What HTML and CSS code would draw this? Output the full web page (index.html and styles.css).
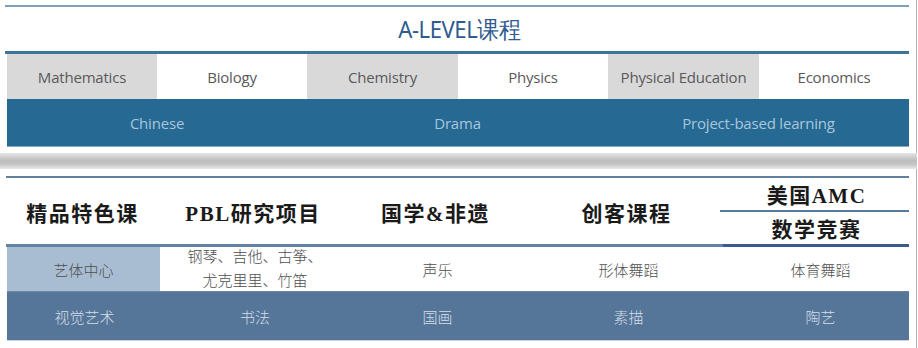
FILE: index.html
```html
<!DOCTYPE html>
<html>
<head>
<meta charset="utf-8">
<link rel="stylesheet" href="styles.css">
</head>
<body>
<div class="panel top">
  <div class="inner">
    <div class="line-thin"></div>
    <div class="title"><span>A-LEVEL课程</span></div>
    <div class="line-thick"></div>
    <div class="subjects">
      <div class="cell gray">Mathematics</div>
      <div class="cell">Biology</div>
      <div class="cell gray">Chemistry</div>
      <div class="cell">Physics</div>
      <div class="cell gray">Physical Education</div>
      <div class="cell">Economics</div>
    </div>
    <div class="extras">
      <div>Chinese</div>
      <div>Drama</div>
      <div>Project-based learning</div>
    </div>
  </div>
</div>
<div class="band"></div>
<div class="panel bottom">
  <div class="inner">
    <div class="line-b1"></div>
    <div class="heads">
      <div class="head">精品特色课</div>
      <div class="head">PBL研究项目</div>
      <div class="head">国学&amp;非遗</div>
      <div class="head">创客课程</div>
      <div class="head amc">
        <div class="amc-top">美国AMC</div>
        <div class="amc-bot">数学竞赛</div>
      </div>
    </div>
    <div class="line-b2"><div class="l"></div><div class="r"></div></div>
    <div class="row r1">
      <div class="c first">艺体中心</div>
      <div class="c two">钢琴、吉他、古筝、<br>尤克里里、竹笛</div>
      <div class="c">声乐</div>
      <div class="c">形体舞蹈</div>
      <div class="c">体育舞蹈</div>
    </div>
    <div class="row r2">
      <div class="c">视觉艺术</div>
      <div class="c">书法</div>
      <div class="c">国画</div>
      <div class="c">素描</div>
      <div class="c">陶艺</div>
    </div>
  </div>
</div>
</body>
</html>
```

FILE: styles.css
```css
html, body {
  margin: 0;
  padding: 0;
  background: #ffffff;
  width: 918px;
  height: 348px;
  overflow: hidden;
}
.panel {
  width: 916px;
  border-right: 1px solid #b4b4b4;
  box-sizing: content-box;
}
.top {
  height: 153px;
}
.inner {
  margin-left: 5px;
  width: 904px;
}
.top .inner {
  padding-top: 5px;
}
.line-thin {
  height: 2px;
  background: #7fa0ba;
}
.title {
  height: 44px;
  display: flex;
  align-items: center;
  justify-content: center;
  font-family: "Noto Sans", sans-serif;
  font-size: 24px;
  color: #2f5b8f;
}
.title span {
  display: inline-block;
  transform: scaleX(0.92);
  letter-spacing: -0.5px;
  margin-left: 4px;
}
.line-thick {
  height: 3px;
  background: #3f7397;
}
.subjects {
  margin-left: 2px;
  display: grid;
  grid-template-columns: 150px 150px 151px 150px 151px 150px;
  height: 45px;
}
.cell {
  display: flex;
  align-items: center;
  justify-content: center;
  font-family: "Open Sans", sans-serif;
  font-weight: 400;
  font-size: 15px;
  color: #595959;
  background: #ffffff;
  letter-spacing: -0.2px;
}
.cell.gray {
  background: #d9d9d9;
}
.extras {
  margin-left: 2px;
  height: 47px;
  background: #266993;
  border-bottom: 1px solid #86a9c4;
  display: grid;
  grid-template-columns: 300px 301px 301px;
}
.extras div {
  display: flex;
  align-items: center;
  justify-content: center;
  font-family: "Open Sans", sans-serif;
  font-size: 15px;
  color: #a9c6dc;
  letter-spacing: -0.2px;
}
.band {
  height: 16px;
  width: 917px;
  background: linear-gradient(to bottom, #e6e6e6 0%, #bdbdbd 45%, #c4c4c4 70%, #e8e8e8 100%);
}
.bottom {
  height: 179px;
}
.bottom .inner {
  padding-top: 7px;
}
.line-b1 {
  height: 2px;
  background: #60819f;
  margin-left: 1px;
}
.heads {
  height: 66px;
  display: grid;
  grid-template-columns: 155px 186px 179px 203px 181px;
  grid-template-rows: 66px;
}
.head {
  display: flex;
  align-items: center;
  justify-content: center;
  font-family: "Liberation Serif", "Noto Sans CJK SC", serif;
  font-weight: 700;
  font-size: 21px;
  color: #1a1a1a;
  letter-spacing: 1.5px;
  padding-top: 1px;
}
.amc {
  flex-direction: column;
  align-items: stretch;
  padding-top: 0;
  margin-left: -8px;
}
.amc-top, .amc-bot {
  height: 32px;
  display: flex;
  align-items: center;
  justify-content: center;
}
.amc-top {
  border-bottom: 2px solid #5a789c;
  padding-left: 4px;
}
.amc-bot {
  padding-left: 4px;
}
.line-b2 {
  height: 3px;
  display: flex;
  margin-left: 1px;
}
.line-b2 .l {
  width: 717px;
  background: #6283a5;
}
.line-b2 .r {
  flex: 1;
  background: #3b5a8f;
}
.row {
  display: grid;
  grid-template-columns: 155px 186px 179px 203px 181px;
  margin-left: 2px;
}
.r1 {
  height: 44px;
  grid-template-rows: 44px;
  border-bottom: 1px solid #6d86a3;
}
.r2 {
  height: 48px;
  grid-template-rows: 48px;
  background: #557599;
  border-bottom: 1px solid #c8d3df;
}
.c {
  display: flex;
  align-items: center;
  justify-content: center;
  font-family: "Noto Sans CJK SC", sans-serif;
  font-weight: 300;
  font-size: 15px;
  color: #4f4f4f;
  text-align: center;
  overflow: visible;
}
.c.first {
  background: #a9bdd2;
  width: 153px;
}
.c.two {
  line-height: 24px;
  padding-bottom: 2px;
}
.r2 .c {
  color: #d4dde8;
}
```
